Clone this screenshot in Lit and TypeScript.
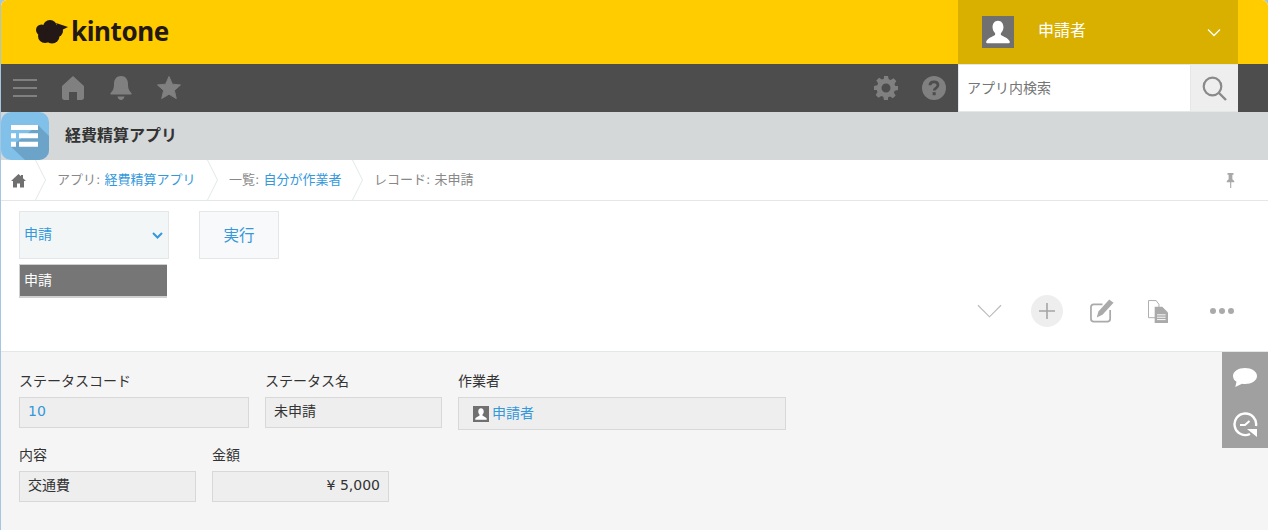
import { LitElement, html, css, svg } from "lit";
import { customElement } from "lit/decorators.js";

const person = svg`<path fill="#fff" d="M12 3.500c-2.600 0-4.100 2.200-4.100 4.800 0 1.900.8 3.500 1.800 4.500.3.300.3 1.300-.2 1.700-1.500 1.100-5.200 2-6.300 4.700-.2.600 0 1.300.8 1.300h16c.8 0 1-.7.8-1.300-1.100-2.700-4.800-3.600-6.300-4.700-.5-.4-.5-1.400-.2-1.700 1-1 1.800-2.600 1.800-4.500C16.100 5.700 14.600 3.500 12 3.500z"/>`;

@customElement("app-root")
export class AppRoot extends LitElement {
  static styles = css`
    :host {
      display: block;
      width: 1268px;
      height: 530px;
      overflow: hidden;
      background: #a5c6e2;
      font-family: "DejaVu Sans", "Noto Sans CJK JP", sans-serif;
      font-size: 14px;
      color: #333;
    }
    .page {
      position: relative;
      margin-left: 1px;
      height: 530px;
      border-radius: 6px 6px 0 0;
      overflow: hidden;
      background: #fff;
      display: flex;
      flex-direction: column;
    }
    svg { display: block; flex: none; }
    .top {
      height: 64px;
      flex: none;
      background: #fc0;
      display: flex;
      justify-content: space-between;
      padding-right: 30px;
    }
    .logo {
      display: flex;
      align-items: center;
      gap: 2px;
      padding-left: 35px;
      font-family: "Noto Sans", "Open Sans", sans-serif;
      font-weight: 700;
      font-size: 26px;
      letter-spacing: -0.4px;
      color: #231815;
    }
    .logo span { position: relative; top: -1px; }
    .user {
      width: 280px;
      background: #dab000;
      display: flex;
      align-items: center;
      padding: 0 17px 0 24px;
      box-sizing: border-box;
      color: #fff;
      font-size: 16px;
    }
    .user .name { margin-left: 24px; flex: 1; position: relative; top: -3px; }
    .avatar { background: #707070; }
    .nav {
      height: 48px;
      flex: none;
      background: #4d4d4d;
      display: flex;
      align-items: center;
      padding-right: 30px;
    }
    .nav-left { display: flex; align-items: center; flex: 1; padding-left: 12px; }
    .nav-right { display: flex; align-items: center; gap: 24px; padding-right: 12px; }
    .search {
      width: 280px;
      height: 48px;
      box-sizing: border-box;
      background: #fff;
      border: 1px solid #e3e7e8;
      border-width: 1px 0 1px 1px;
      display: flex;
      align-items: stretch;
    }
    .search .ph { flex: 1; padding-left: 8px; line-height: 46px; font-size: 14px; color: #757575; }
    .search .btn {
      width: 47px;
      background: #eee;
      border-left: 1px solid #e3e7e8;
      display: flex;
      align-items: center;
      justify-content: center;
    }
    .appbar {
      height: 48px;
      flex: none;
      background: #d4d8d9;
      display: flex;
      align-items: center;
      gap: 16px;
      font-size: 16px;
      font-weight: 700;
      color: #333;
    }
    .appbar .title { position: relative; top: -2px; }
    .crumbs {
      height: 41px;
      flex: none;
      box-sizing: border-box;
      border-bottom: 1px solid #e3e7e8;
      display: flex;
      align-items: center;
      font-size: 13px;
      color: #888;
      padding-right: 33px;
    }
    .crumb { display: flex; align-items: center; height: 40px; white-space: nowrap; padding-bottom: 4px; box-sizing: border-box; }
    .crumb a { color: #3498db; margin-left: 4px; }
    .crumb.home { width: 34px; padding-left: 10px; padding-bottom: 0; }
    .sep { flex: none; }
    .pin { margin-left: auto; }
    .actions {
      height: 151px;
      flex: none;
      box-sizing: border-box;
      border-bottom: 1px solid #e3e7e8;
      padding: 10px 0 0 18px;
      display: flex;
      flex-direction: column;
    }
    .status { display: flex; gap: 30px; align-items: flex-start; }
    .picker { width: 150px; }
    .select {
      width: 150px;
      height: 48px;
      box-sizing: border-box;
      border: 1px solid #e3e7e8;
      background: #f3f6f7;
      color: #3498db;
      display: flex;
      align-items: center;
      justify-content: space-between;
      padding: 0 5px 5px 4px;
    }
    .select svg { position: relative; top: 3px; }
    .run {
      width: 80px;
      height: 48px;
      box-sizing: border-box;
      border: 1px solid #e3e7e8;
      background: #f7f9fa;
      color: #3498db;
      font-size: 15.500px;
      padding-bottom: 2px;
      display: flex;
      align-items: center;
      justify-content: center;
    }
    .options {
      margin-top: 5px;
      width: 148px;
      height: 34px;
      box-sizing: border-box;
      border: 1px solid #d0d0d0;
      border-width: 1px 0 2px 1px;
      background: #767676;
      color: #fff;
      padding-left: 4px;
      line-height: 30px;
    }
    .tools {
      display: flex;
      align-items: center;
      justify-content: flex-end;
      margin-top: -3px;
      padding-right: 34px;
      height: 32px;
    }
    .plus { width: 32px; height: 32px; border-radius: 50%; background: #eee; display: flex; align-items: center; justify-content: center; }
    .record {
      flex: 1;
      background: #f5f5f5;
      padding: 18px 0 0 18px;
      display: flex;
      flex-direction: column;
      gap: 14px;
    }
    .row { display: flex; gap: 16px; align-items: flex-start; }
    .label { height: 27px; line-height: 22px; color: #333; white-space: nowrap; }
    .value {
      height: 31px;
      box-sizing: border-box;
      border: 1px solid #d8d8d8;
      background: #eee;
      padding: 0 8px;
      line-height: 27px;
      white-space: nowrap;
    }
    .value.link { color: #3498db; }
    .value.num { text-align: right; }
    .value.usr {
      height: 33px;
      padding-left: 14px;
      display: flex;
      align-items: center;
      gap: 3px;
      color: #3498db;
    }
    .side {
      position: absolute;
      right: 0;
      top: 352px;
      width: 46px;
      height: 96px;
      box-sizing: border-box;
      padding-top: 16px;
      background: #a0a0a0;
      display: flex;
      flex-direction: column;
      align-items: center;
      gap: 25px;
    }
  `;

  private sep() {
    return html`<svg class="sep" width="12" height="40" viewBox="0 0 12 40"><path d="M.5 0l10 20-10 20" fill="none" stroke="#e3e7e8"/></svg>`;
  }

  render() {
    const w = (n: number) => `${n}px`;
    return html`
      <div class="page">
        <div class="top">
          <div class="logo">
            <svg width="33" height="24" viewBox="0 0 33 24"><g fill="#231815"><circle cx="5.500" cy="10" r="5.500"/><circle cx="14" cy="7" r="7"/><circle cx="9" cy="16" r="7"/><circle cx="16" cy="16" r="7.500"/><circle cx="21" cy="11" r="6"/><path d="M20 3l12 4-8 4z"/></g></svg>
            <span>kintone</span>
          </div>
          <div class="user">
            <svg class="avatar" width="32" height="32" viewBox="0 0 24 24">${person}</svg>
            <div class="name">申請者</div>
            <svg width="14" height="9" viewBox="0 0 14 9"><path d="M1 1.500l6 6 6-6" fill="none" stroke="#fff" stroke-width="1.300"/></svg>
          </div>
        </div>
        <div class="nav">
          <div class="nav-left">
            <svg width="24" height="20" viewBox="0 0 24 20"><path d="M0 2h24M0 10h24M0 18h24" stroke="#808080" stroke-width="2"/></svg>
            <svg width="22" height="24" viewBox="0 0 22 24" style="margin-left:25px"><path fill="#808080" d="M11 0L0 10v11.500C0 23 1 24 2.500 24H7v-8h8v8h4.500c1.500 0 2.500-1 2.500-2.500V10z"/></svg>
            <svg width="22" height="24" viewBox="0 0 22 24" style="margin-left:26px"><path fill="#808080" d="M11 0C6.500 0 4 3.500 4 8c0 4.500-1 6.500-3.300 9-.8.800-.5 1.500.5 1.500h19.600c1 0 1.300-.7.500-1.500C19 14.500 18 12.500 18 8c0-4.500-2.500-8-7-8zM7.500 20.500c.5 2.200 1.700 3.500 3.500 3.500s3-1.300 3.500-3.500z"/></svg>
            <svg width="24" height="24" viewBox="0 0 25 24" style="margin-left:25px"><path fill="#808080" d="M12.500 0l3.500 8 8.500.8-6.400 5.700 2 8.500-7.600-4.500L4.900 23l2-8.500L.5 8.800 9 8z" stroke="#808080" stroke-linejoin="round"/></svg>
          </div>
          <div class="nav-right">
            <svg width="24" height="24" viewBox="0 0 24 24"><path fill="#808080" fill-rule="evenodd" d="M10 0h4l.7 3.300 2 .8 2.800-1.800 2.800 2.800-1.800 2.800.8 2L24 10v4l-3.300.7-.8 2 1.800 2.800-2.800 2.800-2.800-1.800-2 .8L14 24h-4l-.7-3.300-2-.8-2.800 1.800-2.800-2.800 1.800-2.800-.8-2L0 14v-4l3.300-.7.8-2L2.300 4.500l2.800-2.800 2.800 1.800 2-.8zM12 7.500a4.500 4.500 0 100 9 4.500 4.500 0 000-9z"/></svg>
            <svg width="24" height="24" viewBox="0 0 24 24"><circle cx="12" cy="12" r="12" fill="#808080"/><path d="M8 9.300c0-2.200 1.800-3.500 4-3.500s4 1.200 4 3.300c0 3-3.800 2.900-3.800 5.400" fill="none" stroke="#4d4d4d" stroke-width="2.800"/><rect x="10.600" y="16.200" width="3.100" height="3" fill="#4d4d4d"/></svg>
          </div>
          <div class="search">
            <div class="ph">アプリ内検索</div>
            <div class="btn"><svg width="25" height="25" viewBox="0 0 25 25"><circle cx="10.500" cy="10.500" r="8.800" fill="none" stroke="#8a8a8a" stroke-width="2.200"/><path d="M16.500 16.500l7.500 7.500" stroke="#8a8a8a" stroke-width="2.400"/></svg></div>
          </div>
        </div>
        <div class="appbar">
          <svg width="48" height="48" viewBox="0 0 48 48"><defs><clipPath id="c"><rect width="48" height="48" rx="10"/></clipPath></defs><g clip-path="url(#c)"><rect width="48" height="48" fill="#81c0e8"/><path d="M37 13l11 11v24H24L10 34.700z" fill="#6ca3c9"/><path fill="#fff" d="M10 13h27v5H10zM10 21.300h5v5h-5zM18 21.300h19v5H18zM10 29.700h5v5h-5zM18 29.700h19v5H18z"/></g></svg>
          <div class="title">経費精算アプリ</div>
        </div>
        <div class="crumbs">
          <div class="crumb home">
            <svg width="15" height="15" viewBox="0 0 15 15"><path fill="#707070" d="M7.500 1L0 8h2v6.500h4v-4h3v4h4V8h2l-3-2.800V2h-2v1.300z"/></svg>
          </div>
          ${this.sep()}
          <div class="crumb" style="margin-left:10px;width:${w(150)}">アプリ: <a>経費精算アプリ</a></div>
          ${this.sep()}
          <div class="crumb" style="margin-left:10px;width:${w(123)}">一覧: <a>自分が作業者</a></div>
          ${this.sep()}
          <div class="crumb" style="margin-left:10px">レコード: 未申請</div>
          <svg class="pin" width="9" height="15" viewBox="0 0 12 17" preserveAspectRatio="none"><path fill="#a8a8a8" d="M2 0h8v2H8.500v5l2.500 2v1.500H7V17H5.500V10.500H1V9l2.500-2V2H2z"/></svg>
        </div>
        <div class="actions">
          <div class="status">
            <div class="picker">
              <div class="select">
                <span>申請</span>
                <svg width="11" height="7" viewBox="0 0 11 7"><path d="M1 1l4.500 4.500L10 1" fill="none" stroke="#3498db" stroke-width="2"/></svg>
              </div>
              <div class="options">申請</div>
            </div>
            <div class="run">実行</div>
          </div>
          <div class="tools">
            <svg width="25" height="15" viewBox="0 0 26 15" style="margin-right:29px"><path d="M1 1l12 12L25 1" fill="none" stroke="#bbb" stroke-width="1.200"/></svg>
            <div class="plus"><svg width="16" height="16" viewBox="0 0 16 16"><path d="M8 0v16M0 8h16" stroke="#a5a5a5" stroke-width="1.600"/></svg></div>
            <svg width="24" height="24" viewBox="0 0 25 24" style="margin-left:27px"><path d="M13 5H4a3 3 0 00-3 3v12a3 3 0 003 3h14a3 3 0 003-3v-9" fill="none" stroke="#aaa" stroke-width="1.800"/><path fill="#aaa" d="M20 0l4.500 3.500L13 16l-6 2.700 1.800-6.200z"/></svg>
            <svg width="20" height="23" viewBox="0 0 21 24" style="margin-left:34px"><path d="M.5.500h8l3 4v14H.5z" fill="#fff" stroke="#aaa"/><path fill="#aaa" d="M7 7h8l6 6v11H7z"/><path d="M9.500 15.500h9M9.500 18h9M9.500 20.500h9" stroke="#fff"/></svg>
            <svg width="24" height="6" viewBox="0 0 24 6" style="margin-left:42px"><g fill="#aaa"><circle cx="3" cy="3" r="3"/><circle cx="12" cy="3" r="3"/><circle cx="21" cy="3" r="3"/></g></svg>
          </div>
        </div>
        <div class="record">
          <div class="row">
            <div style="width:${w(230)}"><div class="label">ステータスコード</div><div class="value link">10</div></div>
            <div style="width:${w(177)}"><div class="label">ステータス名</div><div class="value">未申請</div></div>
            <div style="width:${w(328)}"><div class="label">作業者</div><div class="value usr"><svg class="avatar" width="16" height="16" viewBox="0 0 24 24">${person}</svg>申請者</div></div>
          </div>
          <div class="row">
            <div style="width:${w(177)}"><div class="label">内容</div><div class="value">交通費</div></div>
            <div style="width:${w(177)}"><div class="label">金額</div><div class="value num">¥ 5,000</div></div>
          </div>
        </div>
        <div class="side">
          <svg width="24" height="19" viewBox="0 0 24 19"><path fill="#fff" d="M12 0C5.400 0 0 3.300 0 8c0 2.600 1.500 4.500 3.500 5.800L2.300 19 9 15.800c1 .2 2 .2 3 .2 6.600 0 12-3.300 12-8s-5.400-8-12-8z"/></svg>
          <svg width="25" height="25" viewBox="0 0 25 25"><path d="M17 22a10.800 10.800 0 1 1 6-8" fill="none" stroke="#fff" stroke-width="2.400"/><path d="M7 13h5l4.500-4" fill="none" stroke="#fff" stroke-width="2"/><path fill="#fff" d="M14 17h10v8z"/></svg>
        </div>
      </div>
    `;
  }
}
